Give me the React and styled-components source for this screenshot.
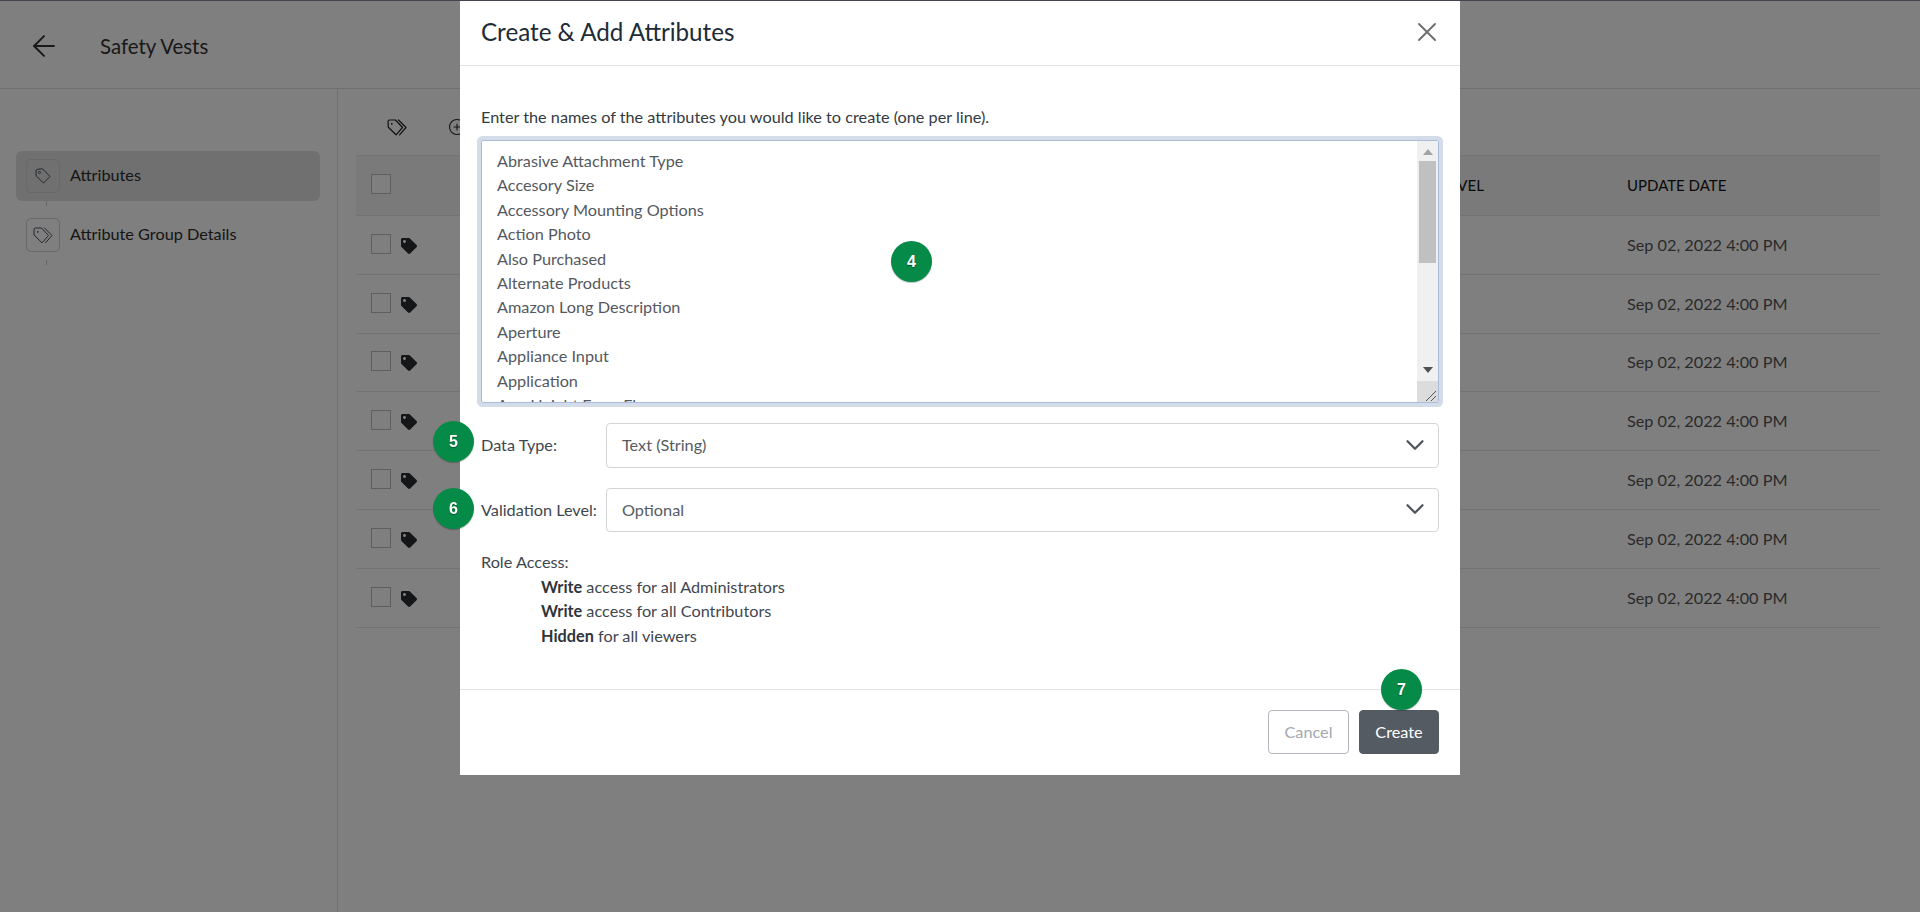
import styled, { createGlobalStyle } from "styled-components";
import { ArrowLeft, ChevronDown, CirclePlus, X } from "lucide-react";
import { FaTag } from "react-icons/fa";

// Data
const attributes = [
  "Abrasive Attachment Type",
  "Accesory Size",
  "Accessory Mounting Options",
  "Action Photo",
  "Also Purchased",
  "Alternate Products",
  "Amazon Long Description",
  "Aperture",
  "Appliance Input",
  "Application",
  "App Height From Floor",
];

const rows = [1, 2, 3, 4, 5, 6, 7];

// Icons
function TagGlyph({ size = 16, width = 1 }) {
  return (
    <svg width={size} height={size} viewBox="0 0 16 16" fill="none" stroke="currentColor" strokeWidth={width} strokeLinejoin="round">
      <path d="M1 3 Q1 1.5 2.5 1.3 L7.5 0.8 L15 8.5 L8.5 15 L1.2 8 Z" />
      <circle cx="4.5" cy="4.5" r="1" />
    </svg>
  );
}

function TagsGlyph({ width = 20, height = 17, stroke = 1.2 }) {
  return (
    <svg width={width} height={height} viewBox="0 0 20 17" fill="none" stroke="currentColor" strokeWidth={stroke} strokeLinejoin="round" strokeLinecap="round">
      <path d="M1 2.5 Q1 1 2.5 1 L8.5 1 L15.5 8.5 L9 15.8 L1.3 8.3 Z" />
      <path d="M11.5 1 L19 8.5 L12.5 15.8" />
      <circle cx="4.8" cy="4.8" r="0.9" fill="currentColor" stroke="none" />
    </svg>
  );
}

// Component
function App() {
  return (
    <>
      <GlobalStyle />
      <Page>
        <PageHeader>
          <BackIcon size={34} strokeWidth={1.4} />
          <PageTitle>Safety Vests</PageTitle>
        </PageHeader>
        <PageBody>
          <Sidebar>
            <NavItem $active>
              <NavIcon>
                <TagGlyph />
              </NavIcon>
              <NavLabel>Attributes</NavLabel>
            </NavItem>
            <NavLine />
            <NavItem>
              <NavIcon>
                <TagsGlyph stroke={1} />
              </NavIcon>
              <NavLabel>Attribute Group Details</NavLabel>
            </NavItem>
            <NavLine />
          </Sidebar>
          <Main>
            <Toolbar>
              <TagsGlyph />
              <CirclePlus size={18} strokeWidth={1.4} />
            </Toolbar>
            <Table>
              <HeaderRow>
                <Check />
                <span />
                <HeaderCell>VALIDATION LEVEL</HeaderCell>
                <HeaderCell>UPDATE DATE</HeaderCell>
              </HeaderRow>
              {rows.map((r) => (
                <Row key={r}>
                  <CheckCell>
                    <Check />
                    <RowTag />
                  </CheckCell>
                  <span />
                  <span />
                  <DateCell>Sep 02, 2022 4:00 PM</DateCell>
                </Row>
              ))}
            </Table>
          </Main>
        </PageBody>
      </Page>

      <Overlay>
        <Modal>
          <ModalHeader>
            <ModalTitle>Create &amp; Add Attributes</ModalTitle>
            <CloseIcon size={32} strokeWidth={1.4} />
          </ModalHeader>
          <ModalBody>
            <Intro>
              Enter the names of the attributes you would like to create (one
              per line).
            </Intro>
            <NamesBox>
              <NamesText>
                {attributes.map((a) => (
                  <div key={a}>{a}</div>
                ))}
              </NamesText>
              <ScrollBar>
                <ScrollArrow $up />
                <ScrollThumb />
                <ScrollTrack />
                <ScrollArrow />
                <ResizeCorner>
                  <svg width="21" height="21" viewBox="0 0 21 21">
                    <path
                      d="M9 20 L19 10 M14 20 L19 15"
                      stroke="#555"
                      strokeWidth="1"
                      fill="none"
                    />
                  </svg>
                </ResizeCorner>
              </ScrollBar>
            </NamesBox>
            <FormRow $height={45}>
              <FormLabel>Data Type:</FormLabel>
              <Select>
                Text (String)
                <ChevronDown size={30} strokeWidth={1.8} />
              </Select>
            </FormRow>
            <FormRow $height={44}>
              <FormLabel>Validation Level:</FormLabel>
              <Select>
                Optional
                <ChevronDown size={30} strokeWidth={1.8} />
              </Select>
            </FormRow>
            <RoleAccess>
              <div>Role Access:</div>
              <RoleLine>
                <b>Write</b> access for all Administrators
              </RoleLine>
              <RoleLine>
                <b>Write</b> access for all Contributors
              </RoleLine>
              <RoleLine>
                <b>Hidden</b> for all viewers
              </RoleLine>
            </RoleAccess>
          </ModalBody>
          <ModalFooter>
            <CancelButton>Cancel</CancelButton>
            <CreateButton>Create</CreateButton>
          </ModalFooter>
          <Badge $left={431} $top={240}>4</Badge>
          <Badge $left={-27} $top={420}>5</Badge>
          <Badge $left={-27} $top={487}>6</Badge>
          <Badge $left={921} $top={668}>7</Badge>
        </Modal>
      </Overlay>
    </>
  );
}

// Style
const GlobalStyle = createGlobalStyle`
  * {
    box-sizing: border-box;
  }
  html, body {
    margin: 0;
    height: 100%;
    background: #fff;
    font-family: Lato, "Open Sans", sans-serif;
    overflow: hidden;
  }
`;

const Page = styled.div`
  height: 912px;
  display: flex;
  flex-direction: column;
  color: #3a3a3a;
  font-size: 16.25px;
`;

const PageHeader = styled.header`
  height: 89px;
  flex-shrink: 0;
  display: flex;
  align-items: center;
  padding: 3px 0 0 27px;
  border-bottom: 1px solid #dedede;
`;

const BackIcon = styled(ArrowLeft)`
  color: #333;
`;

const PageTitle = styled.h1`
  margin: 0 0 0 39px;
  font-size: 20.4px;
  font-weight: 400;
  color: #333;
`;

const PageBody = styled.div`
  flex: 1;
  display: flex;
`;

const Sidebar = styled.aside`
  width: 338px;
  flex-shrink: 0;
  padding: 62px 17px 0 16px;
  border-right: 1px solid #dedede;
`;

const NavItem = styled.div`
  height: 50px;
  display: flex;
  align-items: center;
  gap: 10px;
  padding-left: 10px;
  border-radius: 6px;
  color: #2c2c2c;
  background: ${(props) => (props.$active ? "#e0e0e0" : "transparent")};
`;

const NavIcon = styled.div`
  width: 34px;
  height: 34px;
  display: flex;
  align-items: center;
  justify-content: center;
  border: 1px solid #d0d0d0;
  border-radius: 5px;
  color: #444c5c;
`;

const NavLabel = styled.span`
  padding-bottom: 3px;
`;

const NavLine = styled.div`
  width: 1px;
  height: 5px;
  margin: 0 0 4px 30px;
  background: #cfcfcf;
`;

const Main = styled.main`
  flex: 1;
  padding: 0 40px 0 18px;
`;

const Toolbar = styled.div`
  height: 66px;
  display: flex;
  align-items: center;
  gap: 41px;
  padding: 10px 0 0 31px;
  color: #222;
`;

const Table = styled.div`
  border-top: 1px solid #e6e6e6;
`;

const HeaderRow = styled.div`
  height: 60px;
  display: grid;
  grid-template-columns: 90px 888px 278px 1fr;
  align-items: center;
  padding: 0 0 3px 15px;
  background: #f4f4f4;
  border-bottom: 1px solid #e6e6e6;
  color: #111;
`;

const HeaderCell = styled.div`
  margin-top: 2px;
  font-size: 15px;
`;

const Row = styled.div`
  height: 58.8px;
  display: grid;
  grid-template-columns: 90px 888px 278px 1fr;
  align-items: center;
  padding: 0 0 2px 15px;
  border-bottom: 1px solid #e6e6e6;
`;

const CheckCell = styled.div`
  display: flex;
  align-items: center;
  gap: 10px;
`;

const Check = styled.div`
  width: 20px;
  height: 20px;
  border: 1px solid #bdbdbd;
  background: #fff;
`;

const RowTag = styled(FaTag)`
  width: 16px;
  height: 16px;
  margin-top: 4px;
  color: #2a2d31;
`;

const DateCell = styled.div`
  margin-top: 1px;
  color: #555;
`;

const Overlay = styled.div`
  position: fixed;
  inset: 0;
  display: flex;
  justify-content: center;
  align-items: flex-start;
  background: rgba(0, 0, 0, 0.5);
  border-top: 1px solid #44444f;
`;

const Modal = styled.div`
  position: relative;
  width: 1000px;
  height: 774px;
  display: flex;
  flex-direction: column;
  background: #fff;
`;

const ModalHeader = styled.div`
  height: 65px;
  flex-shrink: 0;
  display: flex;
  align-items: center;
  justify-content: space-between;
  padding: 0 17px 3px 21px;
  border-bottom: 1px solid #e2e5e8;
`;

const ModalTitle = styled.h2`
  margin: 0;
  font-size: 24.2px;
  font-weight: 400;
  color: #212b36;
`;

const CloseIcon = styled(X)`
  color: #6f6f6f;
`;

const ModalBody = styled.div`
  flex: 1;
  padding: 41px 21px 0;
  font-size: 16.25px;
  color: #3f4650;
`;

const Intro = styled.div`
  height: 20px;
  line-height: 20px;
  color: #333a42;
`;

const NamesBox = styled.div`
  height: 263px;
  margin-top: 13px;
  display: flex;
  border: 1px solid #a9bcdc;
  border-radius: 2px;
  box-shadow: 0 0 0 4px #d4dcea;
  overflow: hidden;
`;

const NamesText = styled.div`
  flex: 1;
  padding: 8px 15px 0;
  line-height: 24.4px;
  color: #55595f;
  overflow: hidden;
`;

const ScrollBar = styled.div`
  width: 21px;
  flex-shrink: 0;
  display: flex;
  flex-direction: column;
  align-items: center;
  background: #f0f0f0;
`;

const ScrollArrow = styled.div`
  width: 0;
  height: 0;
  margin: ${(props) => (props.$up ? "8px 0 6px" : "0 0 8px")};
  flex-shrink: 0;
  border-left: 5px solid transparent;
  border-right: 5px solid transparent;
  border-bottom: ${(props) => (props.$up ? "6px solid #a3a3a3" : "0")};
  border-top: ${(props) => (props.$up ? "0" : "6px solid #505050")};
`;

const ScrollThumb = styled.div`
  width: 17px;
  height: 102px;
  flex-shrink: 0;
  background: #c0c0c0;
`;

const ScrollTrack = styled.div`
  flex: 1;
`;

const ResizeCorner = styled.div`
  width: 21px;
  height: 21px;
  flex-shrink: 0;
  background: #dcdcdc;
  svg {
    display: block;
  }
`;

const FormRow = styled.div`
  height: ${(props) => props.$height}px;
  margin-top: 20px;
  display: flex;
  align-items: center;
`;

const FormLabel = styled.div`
  width: 125px;
  flex-shrink: 0;
  padding-bottom: 2px;
  white-space: nowrap;
`;

const Select = styled.div`
  flex: 1;
  height: 100%;
  display: flex;
  align-items: center;
  justify-content: space-between;
  padding: 0 8px 2px 15px;
  border: 1px solid #d3d5d9;
  border-radius: 4px;
  color: #555b63;
  svg {
    color: #50555c;
  }
`;

const RoleAccess = styled.div`
  margin-top: 18px;
  line-height: 24.5px;
`;

const RoleLine = styled.div`
  padding-left: 60px;
  b {
    font-weight: 700;
    color: #2f343a;
  }
`;

const ModalFooter = styled.div`
  height: 86px;
  flex-shrink: 0;
  display: flex;
  justify-content: flex-end;
  gap: 10px;
  padding: 20px 21px 0;
  border-top: 1px solid #e2e5e8;
`;

const CancelButton = styled.button`
  width: 81px;
  height: 44px;
  padding: 0 0 2px;
  background: #fff;
  border: 1px solid #b4b6bd;
  border-radius: 4px;
  color: #a3a8b0;
  font: inherit;
  font-size: 16.25px;
`;

const CreateButton = styled.button`
  width: 80px;
  height: 44px;
  padding: 0 0 2px;
  background: #555b63;
  border: 1px solid #555b63;
  border-radius: 4px;
  color: #fff;
  font: inherit;
  font-size: 16.25px;
`;

const Badge = styled.div`
  position: absolute;
  left: ${(props) => props.$left}px;
  top: ${(props) => props.$top}px;
  width: 41px;
  height: 41px;
  display: flex;
  align-items: center;
  justify-content: center;
  border-radius: 50%;
  background: #058b47;
  color: #fff;
  font-family: "Liberation Sans", sans-serif;
  font-size: 16px;
  font-weight: 700;
  text-shadow: 0 1px 1px #04552c;
  box-shadow: 0 1px 1px rgba(0, 0, 0, 0.25);
`;

export default App;
